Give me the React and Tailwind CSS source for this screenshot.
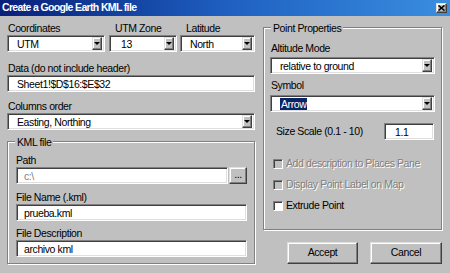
import React from 'react';

const sunken =
  'bg-white border border-t-[#808080] border-l-[#808080] border-b-white border-r-white shadow-[inset_1px_1px_0_#404040,inset_-1px_-1px_0_#dfdfdf]';
const raised =
  'bg-[#c0c0c0] border border-t-[#dfdfdf] border-l-[#dfdfdf] border-b-[#404040] border-r-[#404040] shadow-[inset_-1px_-1px_0_#808080,inset_1px_1px_0_#fff]';
const etched = 'border border-[#808080] shadow-[inset_1px_1px_0_#fff,1px_1px_0_#fff]';

function Label({ children, className = '' }) {
  return <div className={`h-[12px] leading-[12px] whitespace-nowrap ${className}`}>{children}</div>;
}

function Select({ value, className = '', selected = false }) {
  return (
    <div className={`h-[17px] flex items-center pl-[9px] pr-[2px] ${sunken} ${className}`}>
      <span className="flex-1 truncate leading-[12px]">
        {selected ? <span className="bg-[#0a246a] text-white px-[1px] py-[1px]">{value}</span> : value}
      </span>
      <div className={`w-[10px] h-[13px] flex items-center justify-center ${raised}`}>
        <span className="w-0 h-0 border-x-[3px] border-x-transparent border-t-[3px] border-t-black" />
      </div>
    </div>
  );
}

function TextBox({ value, className = '', muted = false }) {
  return (
    <div className={`h-[17px] flex items-center pl-[7px] leading-[12px] ${sunken} ${className} ${muted ? 'text-[#808080]' : ''}`}>
      {value}
    </div>
  );
}

function Group({ title, className = '', children }) {
  return (
    <div className={`relative ${etched} ${className}`}>
      <span className="absolute -top-[6px] left-[7px] px-[2px] bg-[#c0c0c0] leading-[12px]">{title}</span>
      {children}
    </div>
  );
}

function Check({ label, disabled = false }) {
  return (
    <div className="h-[21px] flex items-center pl-[9px] gap-[3px]">
      <span
        className={`w-[10px] h-[10px] border border-t-[#808080] border-l-[#808080] border-b-white border-r-white shadow-[inset_1px_1px_0_#404040] ${
          disabled ? 'bg-[#c0c0c0]' : 'bg-white'
        }`}
      />
      <span className={disabled ? 'text-[#808080] [text-shadow:1px_1px_0_#fff]' : ''}>{label}</span>
    </div>
  );
}

export default function App() {
  return (
    <div className="w-[450px] h-[273px] overflow-hidden bg-[#c0c0c0] text-black text-[10.5px] tracking-[-0.4px] font-['Liberation_Sans',Arial,sans-serif]">
      {/* Title bar */}
      <div className="h-[16px] flex items-center justify-between pl-[2px] pr-[3px] bg-gradient-to-r from-[#0a1f7a] via-[#1f5fc0] to-[#3a8ee0]">
        <span className="text-white font-bold text-[10.5px] tracking-[-0.65px]">Create a Google Earth KML file</span>
        <div className={`w-[11px] h-[10px] flex items-center justify-center ${raised}`}>
          <svg width="7" height="6" viewBox="0 0 7 6">
            <path d="M0.5 0.5 L6.5 5.5 M6.5 0.5 L0.5 5.5" stroke="#000" strokeWidth="1.6" />
          </svg>
        </div>
      </div>

      <div className="flex pl-[7px] gap-[8px]">
        {/* Left column */}
        <div className="w-[248px] flex flex-col">
          <div className="flex mt-[6px]">
            <div className="w-[98px] flex flex-col gap-[1px]">
              <Label className="pl-[1px]">Coordinates</Label>
              <Select value="UTM" />
            </div>
            <div className="w-[68px] ml-[4px] flex flex-col gap-[1px]">
              <Label className="pl-[6px]">UTM Zone</Label>
              <Select value="13" className="pl-[11px]" />
            </div>
            <div className="w-[75px] ml-[3px] flex flex-col gap-[1px]">
              <Label className="pl-[6px]">Latitude</Label>
              <Select value="North" />
            </div>
          </div>

          <Label className="mt-[10px] pl-[1px]">Data (do not include header)</Label>
          <TextBox value="Sheet1!$D$16:$E$32" className="mt-[1px] pl-[9px]" />

          <Label className="mt-[8px] pl-[1px]">Columns order</Label>
          <Select value="Easting, Northing" className="mt-[1px]" />

          <Group title="KML file" className="mt-[11px] h-[123px] pl-[8px] pr-[7px]">
            <Label className="mt-[12px]">Path</Label>
            <div className="flex mt-[1px] gap-[1px]">
              <TextBox value="c:\" muted className="flex-1" />
              <div className={`w-[18px] h-[17px] flex items-center justify-center leading-none pb-[3px] ${raised}`}>...</div>
            </div>
            <Label className="mt-[7px]">File Name (.kml)</Label>
            <TextBox value="prueba.kml" className="mt-[1px]" />
            <Label className="mt-[6px]">File Description</Label>
            <TextBox value="archivo kml" className="mt-[1px]" />
          </Group>
        </div>

        {/* Right column */}
        <div className="w-[179px] flex flex-col">
          <Group title="Point Properties" className="mt-[11px] h-[203px] px-[6px]">
            <Label className="mt-[14px] pl-[1px]">Altitude Mode</Label>
            <Select value="relative to ground" className="mt-[3px]" />
            <Label className="mt-[5px] pl-[1px]">Symbol</Label>
            <Select value="Arrow" selected className="mt-[4px]" />
            <div className="flex items-center mt-[11px] pl-[6px]">
              <span className="flex-1">Size Scale (0.1 - 10)</span>
              <TextBox value="1.1" className="w-[50px] mr-[1px] pl-[10px]" />
            </div>
            <div className="mt-[13px] -ml-[6px]">
              <Check label="Add description to Places Pane" disabled />
              <Check label="Display Point Label on Map" disabled />
              <Check label="Extrude Point" />
            </div>
          </Group>
          <div className="flex mt-[12px] pl-[24px] gap-[12px]">
            <button className={`w-[71px] h-[22px] ${raised}`}>Accept</button>
            <button className={`w-[72px] h-[22px] ${raised}`}>Cancel</button>
          </div>
        </div>
      </div>
    </div>
  );
}
